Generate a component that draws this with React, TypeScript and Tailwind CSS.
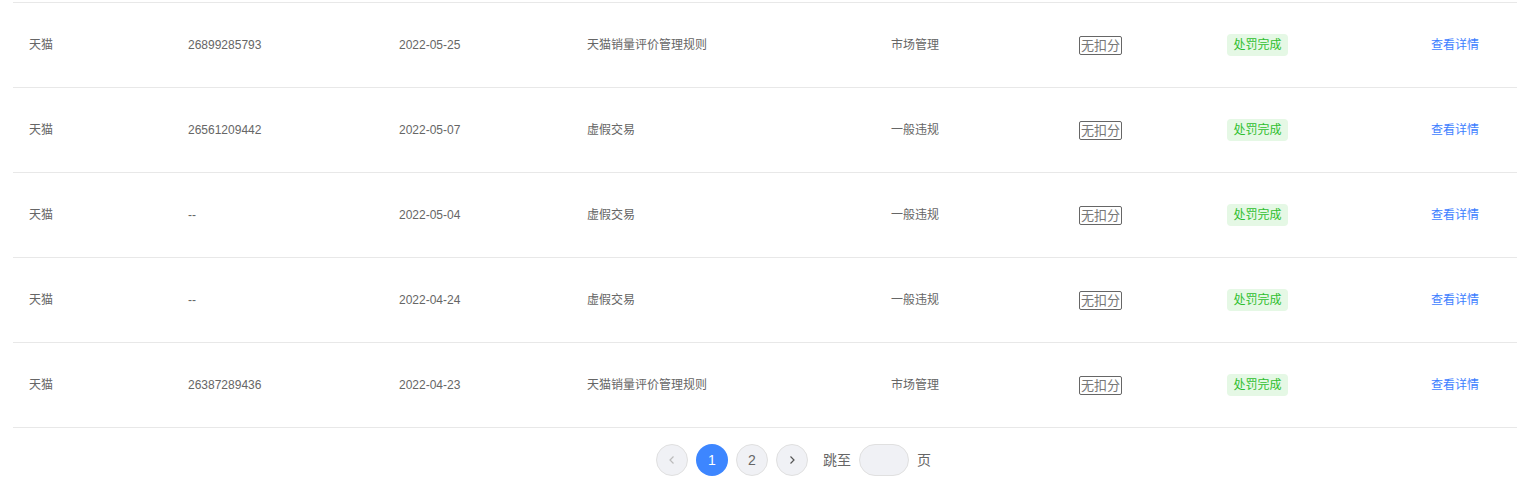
import React from "react";

const rows = [
  ["天猫", "26899285793", "2022-05-25", "天猫销量评价管理规则", "市场管理"],
  ["天猫", "26561209442", "2022-05-07", "虚假交易", "一般违规"],
  ["天猫", "--", "2022-05-04", "虚假交易", "一般违规"],
  ["天猫", "--", "2022-04-24", "虚假交易", "一般违规"],
  ["天猫", "26387289436", "2022-04-23", "天猫销量评价管理规则", "市场管理"],
];

export default function App() {
  return (
    <div
      className="w-[1517px] h-[487px] bg-white text-[#666] text-[12px] overflow-hidden"
      style={{ fontFamily: '"Liberation Sans", "Noto Sans CJK SC", sans-serif' }}
    >
      <div className="ml-[13px] mt-[2px] border-t border-[#e8e8e8]">
        {rows.map((r, i) => (
          <div key={i} className="flex items-center h-[85px] border-b border-[#e8e8e8]">
            <div className="w-[159px] pl-4">{r[0]}</div>
            <div className="w-[211px] pl-4">{r[1]}</div>
            <div className="w-[188px] pl-4">{r[2]}</div>
            <div className="w-[304px] pl-4">{r[3]}</div>
            <div className="w-[188px] pl-4">{r[4]}</div>
            <div className="w-[148px] pl-4">
              <span className="inline-flex items-center justify-center h-[19px] px-[1px] border border-[#666] rounded-[2px] text-[13px] leading-none text-[#777]">
                无扣分
              </span>
            </div>
            <div className="w-[204px] pl-4">
              <span className="inline-flex items-center justify-center h-[22px] w-[61px] rounded-[4px] bg-[#e5f8e5] text-[#2fbf2f]">
                处罚完成
              </span>
            </div>
            <div className="w-[102px] pl-4 text-[#3d7eff]">查看详情</div>
          </div>
        ))}
      </div>
      <div className="flex items-center justify-center gap-2 mt-4 pl-[70px]">
        <div className="w-8 h-8 rounded-full bg-[#f0f1f5] border border-[#e0e0e0] flex items-center justify-center text-[#bbb]">
          <svg width="10" height="10" viewBox="0 0 10 10" fill="none" stroke="currentColor" strokeWidth="1.2">
            <path d="M6.5 1.5L3 5l3.5 3.5" />
          </svg>
        </div>
        <div className="w-8 h-8 rounded-full bg-[#3d86ff] flex items-center justify-center text-white text-[14px]">1</div>
        <div className="w-8 h-8 rounded-full bg-[#f0f1f5] border border-[#e0e0e0] flex items-center justify-center text-[#666] text-[14px]">2</div>
        <div className="w-8 h-8 rounded-full bg-[#f0f1f5] border border-[#e0e0e0] flex items-center justify-center text-[#555]">
          <svg width="10" height="10" viewBox="0 0 10 10" fill="none" stroke="currentColor" strokeWidth="1.2">
            <path d="M3.5 1.5L7 5 3.5 8.5" />
          </svg>
        </div>
        <span className="ml-[7px] text-[14px] text-[#666]">跳至</span>
        <div className="w-[50px] h-8 rounded-full bg-[#f0f1f5] border border-[#e0e0e0]" />
        <span className="text-[14px] text-[#666]">页</span>
      </div>
    </div>
  );
}
